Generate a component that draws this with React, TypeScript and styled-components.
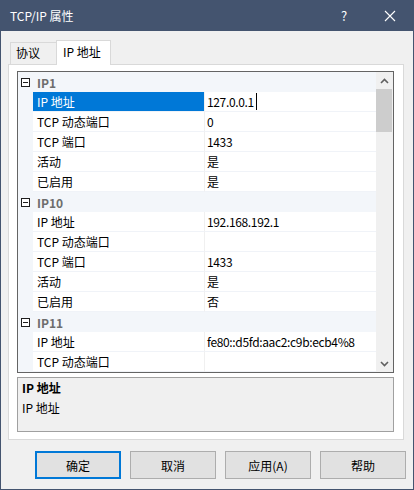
import React from "react";
import styled, { createGlobalStyle } from "styled-components";

type Prop = { name: string; value: string };
type Group = { title: string; props: Prop[] };

const groups: Group[] = [
  {
    title: "IP1",
    props: [
      { name: "IP 地址", value: "127.0.0.1" },
      { name: "TCP 动态端口", value: "0" },
      { name: "TCP 端口", value: "1433" },
      { name: "活动", value: "是" },
      { name: "已启用", value: "是" },
    ],
  },
  {
    title: "IP10",
    props: [
      { name: "IP 地址", value: "192.168.192.1" },
      { name: "TCP 动态端口", value: "" },
      { name: "TCP 端口", value: "1433" },
      { name: "活动", value: "是" },
      { name: "已启用", value: "否" },
    ],
  },
  {
    title: "IP11",
    props: [
      { name: "IP 地址", value: "fe80::d5fd:aac2:c9b:ecb4%8" },
      { name: "TCP 动态端口", value: "" },
    ],
  },
];

const App: React.FC = (): JSX.Element => {
  return (
    <>
      <GlobalStyle />
      <Window>
        <TitleBar>
          <Title>TCP/IP 属性</Title>
          <HelpGlyph>?</HelpGlyph>
          <CloseGlyph>
            <svg width="12" height="12" viewBox="0 0 12 12">
              <path d="M1 1 L11 11 M11 1 L1 11" stroke="#fff" strokeWidth="1.1" />
            </svg>
          </CloseGlyph>
        </TitleBar>
        <Body>
          <TabStrip>
            <Tab>协议</Tab>
            <Tab $active>IP 地址</Tab>
          </TabStrip>
          <Panel>
            <Grid>
              <Rows>
                {groups.map((g, gi) => (
                  <React.Fragment key={g.title}>
                    <CategoryRow>
                      <Expander>
                        <svg width="9" height="9" viewBox="0 0 9 9">
                          <rect x="0.5" y="0.5" width="8" height="8" fill="#fff" stroke="#1e1e1e" />
                          <path d="M2 4.5 H7" stroke="#1e1e1e" />
                        </svg>
                      </Expander>
                      <CategoryLabel>{g.title}</CategoryLabel>
                    </CategoryRow>
                    {g.props.map((p, pi) => {
                      const selected = gi === 0 && pi === 0;
                      return (
                        <PropRow key={g.title + p.name}>
                          <MarginCell />
                          <NameCell $selected={selected}>{p.name}</NameCell>
                          <ValueCell>
                            {p.value}
                            {selected && <Caret />}
                          </ValueCell>
                        </PropRow>
                      );
                    })}
                  </React.Fragment>
                ))}
              </Rows>
              <ScrollBar>
                <ArrowButton>
                  <svg width="9" height="6" viewBox="0 0 9 6">
                    <path d="M1 5 L4.5 1.5 L8 5" fill="none" stroke="#606060" strokeWidth="1.6" />
                  </svg>
                </ArrowButton>
                <Thumb />
                <Track />
                <ArrowButton>
                  <svg width="9" height="6" viewBox="0 0 9 6">
                    <path d="M1 1 L4.5 4.5 L8 1" fill="none" stroke="#606060" strokeWidth="1.6" />
                  </svg>
                </ArrowButton>
              </ScrollBar>
            </Grid>
            <Description>
              <DescTitle>IP 地址</DescTitle>
              <DescText>IP 地址</DescText>
            </Description>
          </Panel>
          <Footer>
            <Button $default>确定</Button>
            <Button>取消</Button>
            <Button>应用(A)</Button>
            <Button>帮助</Button>
          </Footer>
        </Body>
      </Window>
    </>
  );
};

const GlobalStyle = createGlobalStyle`
  html, body {
    margin: 0;
    padding: 0;
    background: #ffffff;
  }
  body {
    font-family: "Noto Sans CJK SC", "Noto Sans", sans-serif;
    font-size: 12px;
    color: #000;
  }
  * {
    box-sizing: border-box;
  }
`;

const Window = styled.div`
  width: 414px;
  height: 490px;
  display: flex;
  flex-direction: column;
  background: #44546f;
  padding: 0 1px 1px;
`;

const TitleBar = styled.div`
  height: 31px;
  display: flex;
  align-items: center;
  padding-left: 9px;
  color: #fff;
`;

const Title = styled.div`
  flex: 1;
  font-size: 12px;
  line-height: 16px;
`;

const HelpGlyph = styled.div`
  width: 12px;
  font-size: 13px;
  line-height: 16px;
  margin-right: 31px;
`;

const CloseGlyph = styled.div`
  width: 12px;
  height: 12px;
  margin-right: 17px;
  display: flex;
`;

const Body = styled.div`
  flex: 1;
  background: #f0f0f0;
  padding: 9px 9px 0 7px;
  display: flex;
  flex-direction: column;
`;

const TabStrip = styled.div`
  height: 24px;
  display: flex;
  align-items: flex-end;
  padding-left: 2px;
`;

const Tab = styled.div<{ $active?: boolean }>`
  position: relative;
  z-index: ${(p) => (p.$active ? 1 : 0)};
  height: ${(p) => (p.$active ? "25px" : "22px")};
  width: ${(p) => (p.$active ? "55px" : "47px")};
  margin-left: ${(p) => (p.$active ? "-1px" : "0")};
  margin-bottom: ${(p) => (p.$active ? "-1px" : "0")};
  padding-left: ${(p) => (p.$active ? "6px" : "5px")};
  background: ${(p) => (p.$active ? "#ffffff" : "#f0f0f0")};
  border: 1px solid #d9d9d9;
  border-bottom: none;
  font-size: 12px;
  line-height: ${(p) => (p.$active ? "22px" : "20px")};
  white-space: nowrap;
`;

const Panel = styled.div`
  height: 376px;
  background: #ffffff;
  border: 1px solid #d9d9d9;
  padding: 6px 9px 0 8px;
  display: flex;
  flex-direction: column;
  gap: 4px;
`;

const Grid = styled.div`
  height: 302px;
  border: 1px solid #646464;
  display: flex;
  overflow: hidden;
  background: #ffffff;
`;

const Rows = styled.div`
  flex: 1;
  display: flex;
  flex-direction: column;
  overflow: hidden;
`;

const CategoryRow = styled.div`
  flex: none;
  height: 20px;
  display: flex;
  align-items: center;
  background: #f3f6fa;
`;

const Expander = styled.div`
  width: 9px;
  height: 9px;
  margin: 0 6px 0 3px;
  display: flex;
`;

const CategoryLabel = styled.div`
  padding-left: 1px;
  font-weight: bold;
  color: #6d6d6d;
  line-height: 19px;
`;

const PropRow = styled.div`
  flex: none;
  height: 20px;
  display: flex;
`;

const MarginCell = styled.div`
  width: 15px;
  background: #f3f6fa;
`;

const NameCell = styled.div<{ $selected?: boolean }>`
  width: 172px;
  padding-left: 4px;
  line-height: 19px;
  white-space: nowrap;
  color: ${(p) => (p.$selected ? "#ffffff" : "#000000")};
  background: ${(p) => (p.$selected ? "#0078d7" : "#ffffff")};
  border-bottom: 1px solid #f0f3f8;
  border-right: 1px solid #f0f0f0;
`;

const ValueCell = styled.div`
  flex: 1;
  padding-left: 2px;
  line-height: 19px;
  letter-spacing: -0.35px;
  white-space: nowrap;
  display: flex;
  align-items: center;
  border-bottom: 1px solid #f0f3f8;
`;

const Caret = styled.span`
  display: inline-block;
  width: 1px;
  height: 17px;
  margin-left: 2px;
  background: #000;
`;

const ScrollBar = styled.div`
  width: 17px;
  background: #f0f0f0;
  display: flex;
  flex-direction: column;
`;

const ArrowButton = styled.div`
  height: 17px;
  display: flex;
  align-items: center;
  justify-content: center;
`;

const Thumb = styled.div`
  height: 43px;
  margin: 0 1px 0 0;
  background: #cdcdcd;
`;

const Track = styled.div`
  flex: 1;
`;

const Description = styled.div`
  height: 55px;
  border: 1px solid #a0a0a0;
  background: #f0f0f0;
  padding: 1px 4px 0;
`;

const DescTitle = styled.div`
  font-weight: bold;
  line-height: 18px;
`;

const DescText = styled.div`
  margin-top: 2px;
  line-height: 18px;
`;

const Footer = styled.div`
  margin-top: 11px;
  display: flex;
  justify-content: flex-end;
  gap: 9px;
  margin-right: -2px;
`;

const Button = styled.div<{ $default?: boolean }>`
  width: 86px;
  height: 28px;
  display: flex;
  align-items: center;
  justify-content: center;
  background: #e1e1e1;
  border: ${(p) => (p.$default ? "2px solid #0078d7" : "1px solid #adadad")};
  font-size: 12px;
`;

export default App;
